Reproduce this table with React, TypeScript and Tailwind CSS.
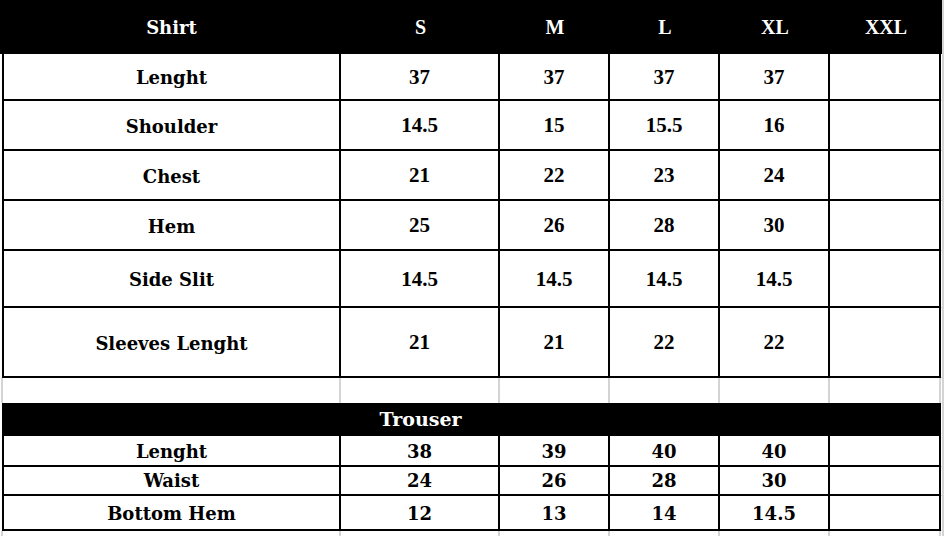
import React from "react"

const cols = "grid grid-cols-[341px_159px_110px_110px_110px_111px_5px]"
const label = "font-['DejaVu_Serif',serif] font-bold text-[18px] text-black"
const num = "font-['Liberation_Serif',serif] font-bold text-[21px] text-black"
const tnum = "font-['DejaVu_Serif',serif] font-bold text-[18px] text-black"

const shirtRows: { name: string; values: string[]; h: string }[] = [
  { name: "Lenght", values: ["37", "37", "37", "37"], h: "h-[47px]" },
  { name: "Shoulder", values: ["14.5", "15", "15.5", "16"], h: "h-[50px]" },
  { name: "Chest", values: ["21", "22", "23", "24"], h: "h-[50px]" },
  { name: "Hem", values: ["25", "26", "28", "30"], h: "h-[50px]" },
  { name: "Side Slit", values: ["14.5", "14.5", "14.5", "14.5"], h: "h-[57px]" },
  { name: "Sleeves Lenght", values: ["21", "21", "22", "22"], h: "h-[70px]" },
]

const trouserRows: { name: string; values: string[]; h: string }[] = [
  { name: "Lenght", values: ["38", "39", "40", "40"], h: "h-[29px]" },
  { name: "Waist", values: ["24", "26", "28", "30"], h: "h-[31px]" },
  { name: "Bottom Hem", values: ["12", "13", "14", "14.5"], h: "h-[35px]" },
]

function DataRow({ name, values, h, numCls }: { name: string; values: string[]; h: string; numCls: string }) {
  return (
    <div className={`${cols} ${h}`}>
      <div className={`flex items-center justify-center ml-[2px] border-l-2 border-r-2 border-b-2 border-black pt-[2px] ${label}`}>{name}</div>
      {values.map((v, i) => (
        <div key={i} className={`flex items-center justify-center border-r-2 border-b-2 border-black pt-[2px] ${numCls}`}>
          {v}
        </div>
      ))}
      <div className="border-r-2 border-b-2 border-black" />
      <div className="border-b border-[#d4d4d4] mr-[2px] border-r-2 border-r-[#d4d4d4]" />
    </div>
  )
}

function GrayRow({ h }: { h: string }) {
  return (
    <div className={`${cols} ${h}`}>
      {[0, 1, 2, 3, 4, 5].map((i) => (
        <div
          key={i}
          className={`border-r-2 border-[#d4d4d4] ${i === 0 ? "border-l-2 ml-[1px]" : ""}`}
        />
      ))}
      <div className="mr-[2px] border-r-2 border-[#d4d4d4]" />
    </div>
  )
}

export default function App() {
  return (
    <div className="w-[946px] h-[536px] bg-white overflow-hidden">
      {/* header */}
      <div className={`${cols} h-[54px]`}>
        {["Shirt", "S", "M", "L", "XL", "XXL"].map((t, i) => (
          <div
            key={t}
            className={`flex items-center justify-center bg-black text-white font-bold ${
              i === 0 ? "font-['DejaVu_Serif',serif] text-[18px] pl-[2px]" : "font-['Liberation_Serif',serif] text-[20px]"
            } ${i === 5 ? "-mr-[1px]" : ""}`}
          >
            {t}
          </div>
        ))}
        <div className="border-b border-[#d4d4d4] mr-[2px] border-r-2 border-r-[#d4d4d4] ml-[1px]" />
      </div>

      {shirtRows.map((r) => (
        <DataRow key={r.name} {...r} numCls={num} />
      ))}

      <GrayRow h="h-[25px]" />

      {/* trouser band */}
      <div className={`${cols} h-[33px]`}>
        <div className="bg-black ml-[2px]" />
        <div className="flex items-center justify-center bg-black text-white font-['DejaVu_Serif',serif] font-bold text-[19px] whitespace-nowrap">
          Trouser
        </div>
        <div className="bg-black" />
        <div className="bg-black" />
        <div className="bg-black" />
        <div className="bg-black" />
        <div className="mr-[2px] border-r-2 border-[#d4d4d4]" />
      </div>

      {trouserRows.map((r, i) => (
        <DataRow key={i} {...r} numCls={tnum} />
      ))}

      <GrayRow h="h-[10px]" />
    </div>
  )
}
